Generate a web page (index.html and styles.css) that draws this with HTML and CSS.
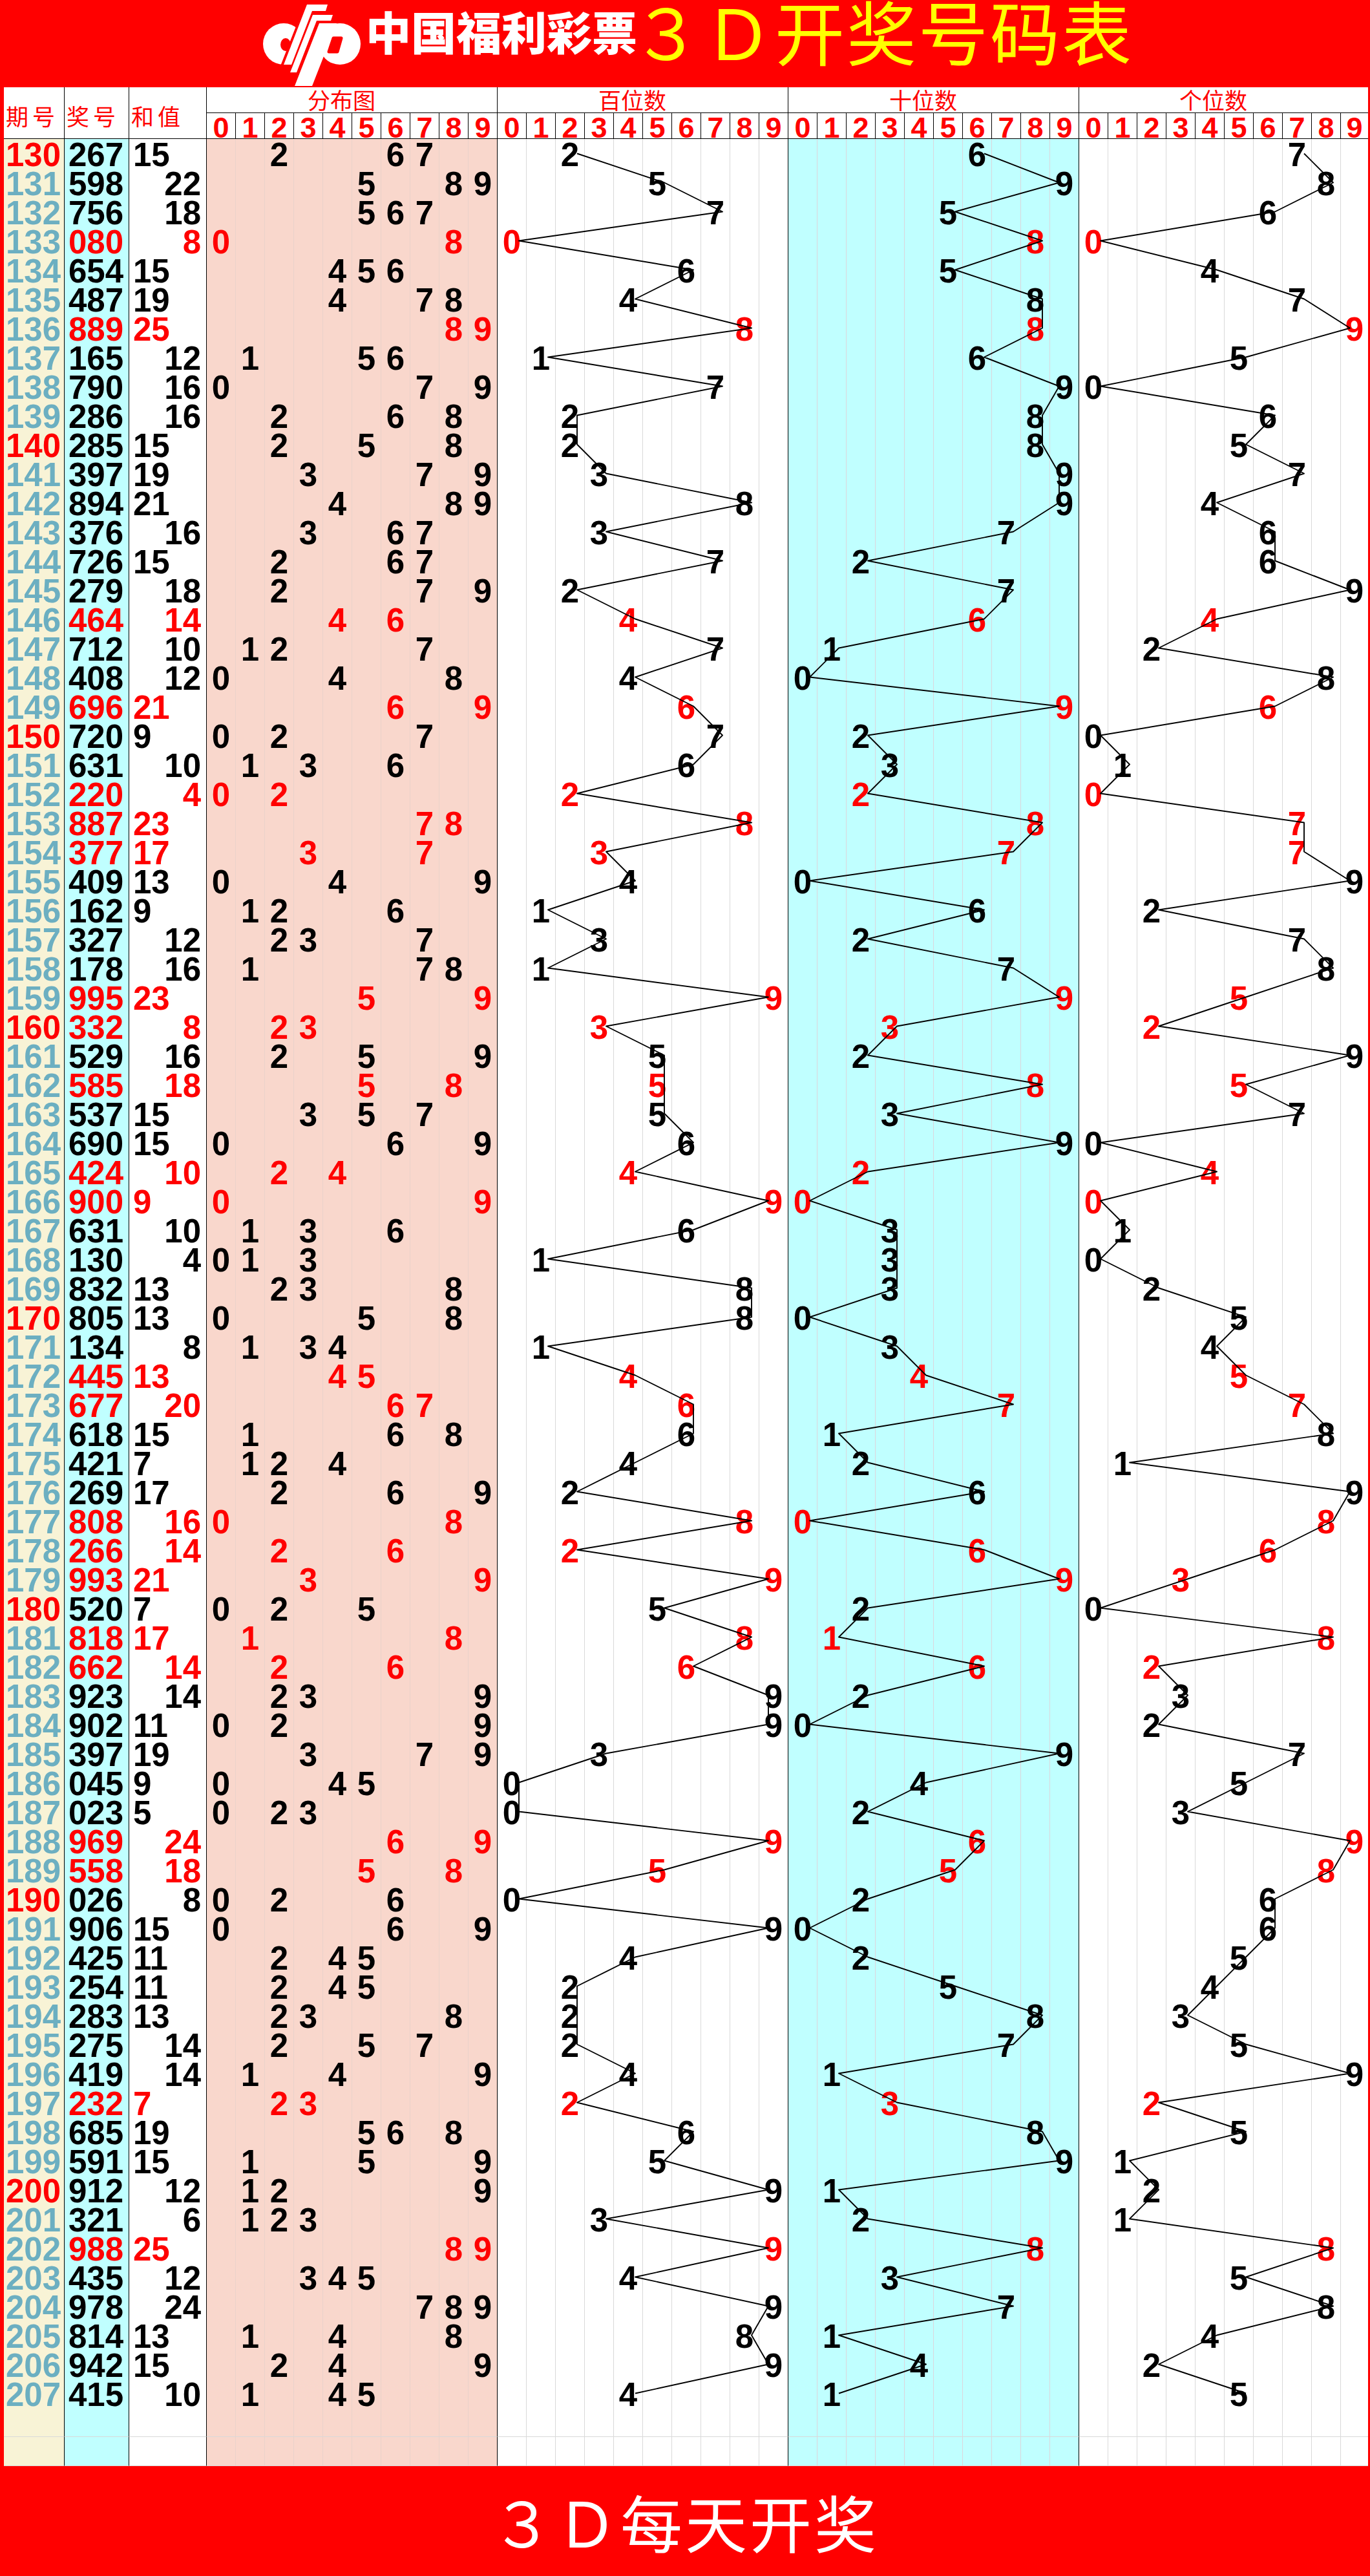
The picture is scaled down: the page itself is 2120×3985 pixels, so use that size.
FILE: index.html
```html
<!DOCTYPE html>
<html lang="zh-CN">
<head>
<meta charset="utf-8">
<title>3D开奖号码表</title>
<link rel="stylesheet" href="styles.css">
</head>
<body>
<header class="banner">
  <svg class="logo" viewBox="0 0 175 135" width="175" height="135" aria-hidden="true">
    <defs>
      <clipPath id="cclip"><polygon points="0,0 79,0 26,135 0,135"/></clipPath>
    </defs>
    <g fill="#fff">
      <circle cx="44" cy="68" r="32" clip-path="url(#cclip)"/>
      <polygon points="80,7 112,7 109,17 88,17 56,100 44,100"/>
      <polygon points="89,23 120,23 117,32 95,32 64,112 54,112"/>
      <circle cx="131" cy="68" r="32"/>
      <polygon points="99,36 126,36 88,133 61,133"/>
    </g>
    <ellipse cx="47" cy="69" rx="8" ry="10" fill="#f00"/>
    <path d="M121 59 L133 59 L127 80 L114 80 Z" fill="#f00" stroke="#f00" stroke-width="5" stroke-linejoin="round"/>
  </svg>
  <span class="brand">中国福利彩票</span>
  <h1 class="title">３Ｄ开奖号码表</h1>
</header>

<main class="sheet">
  <div class="thead">
    <div class="lab">期号</div>
    <div class="lab">奖号</div>
    <div class="lab">和值</div>
    <div class="grp">分布图</div>
    <div class="grp">百位数</div>
    <div class="grp">十位数</div>
    <div class="grp last">个位数</div>

    <div class="hd">0</div><div class="hd">1</div><div class="hd">2</div><div class="hd">3</div><div class="hd">4</div>
    <div class="hd">5</div><div class="hd">6</div><div class="hd">7</div><div class="hd">8</div><div class="hd">9</div>

    <div class="hd">0</div><div class="hd">1</div><div class="hd">2</div><div class="hd">3</div><div class="hd">4</div>
    <div class="hd">5</div><div class="hd">6</div><div class="hd">7</div><div class="hd">8</div><div class="hd">9</div>

    <div class="hd">0</div><div class="hd">1</div><div class="hd">2</div><div class="hd">3</div><div class="hd">4</div>
    <div class="hd">5</div><div class="hd">6</div><div class="hd">7</div><div class="hd">8</div><div class="hd">9</div>

    <div class="hd">0</div><div class="hd">1</div><div class="hd">2</div><div class="hd">3</div><div class="hd">4</div>
    <div class="hd">5</div><div class="hd">6</div><div class="hd">7</div><div class="hd">8</div><div class="hd last">9</div>
  </div>
  <div class="tbody" id="tbody"></div>
</main>

<footer class="footer">３Ｄ每天开奖</footer>

<script src="script.js"></script>
</body>
</html>
```

FILE: styles.css
```css
* {
  box-sizing: border-box;
}

:root {
  --cols: 94px 100px 120px repeat(39, 45px) 42px;
  --digit-font: "Liberation Sans", Arial, sans-serif;
  --cjk-font: "Noto Sans CJK SC", "Noto Sans", sans-serif;
  --red: #ff0000;
  --cream: #f8f3d6;
  --cyan: #c0ffff;
  --pink: #f9d7cc;
  --teal: #6cafc1;
  --grid: #d9d9d9;
}

html,
body {
  margin: 0;
  padding: 0;
}

body {
  width: 2120px;
  background: var(--red);
  font-family: var(--cjk-font);
}

/* ---------- banner ---------- */
.banner {
  height: 135px;
  display: flex;
  align-items: flex-start;
  padding-left: 395px;
}

.logo {
  display: block;
  flex: none;
}

.brand {
  margin: 13px 0 0 -4px;
  color: #fff;
  font: 900 70px/1 var(--cjk-font);
  white-space: nowrap;
}

.title {
  margin: -8px 0 0 -9px;
  color: #ffff00;
  font: 400 108px/1 var(--cjk-font);
  letter-spacing: 3px;
  white-space: nowrap;
}

/* ---------- sheet ---------- */
.sheet {
  display: block;
  margin-left: 6px;
  width: 2111px;
  background: #fff;
}

.thead {
  display: grid;
  grid-template-columns: var(--cols);
  grid-template-rows: 40px 40px;
  background: #fff;
}

.lab {
  grid-row: span 2;
  display: flex;
  align-items: center;
  padding: 8px 0 0 3px;
  border-right: 1px solid #000;
  border-bottom: 1px solid #000;
  color: var(--red);
  font: 400 35px/1 var(--cjk-font);
  letter-spacing: 6px;
  white-space: nowrap;
}

.grp {
  grid-column: span 10;
  padding-right: 32px;
  border-right: 1px solid #000;
  border-bottom: 1px solid #000;
  color: var(--red);
  font: 400 35px/38px var(--cjk-font);
  text-align: center;
  white-space: nowrap;
}

.grp.last,
.hd.last {
  border-right: none;
}

.hd {
  border-right: 1px solid #000;
  border-bottom: 1px solid #000;
  color: var(--red);
  font: 700 45px/45px var(--digit-font);
  text-align: center;
}

/* ---------- rows ---------- */
.tbody {
  position: relative;
}

.row {
  display: grid;
  grid-template-columns: var(--cols);
  height: 45px;
  color: #000;
  font: 700 51px/49px var(--digit-font);
}

.row > div {
  border-bottom: 1px solid var(--grid);
  white-space: nowrap;
}

.per {
  padding-left: 3px;
  background: var(--cream);
  color: var(--teal);
  border-right: 1px solid #000;
}

.per.ten {
  color: var(--red);
}

.draw {
  padding-left: 6px;
  background: var(--cyan);
  border-right: 1px solid #000;
}

.sum {
  background: #fff;
  border-right: 1px solid #000;
}

.sum.odd {
  padding-left: 6px;
}

.sum.even {
  padding-right: 8px;
  text-align: right;
}

.c {
  text-align: center;
  border-right: 1px solid var(--grid);
}

.c.dist {
  background: var(--pink);
  border-right-color: #ead2ca;
}

.c.p0,
.c.p2 {
  background: #fff;
}

.c.p1 {
  background: var(--cyan);
  border-right-color: #dcd6dc;
}

.c.end {
  border-right-color: #000;
}

.c.p2.end {
  border-right: none;
}

.row.pair .draw,
.row.pair .sum,
.row.pair .c {
  color: var(--red);
}

/* ---------- trend lines ---------- */
.trend {
  position: absolute;
  left: 0;
  top: 0;
  overflow: visible;
  pointer-events: none;
}

.trend-line {
  fill: none;
  stroke: #000;
  stroke-width: 1.9;
  stroke-linejoin: round;
}

/* ---------- footer ---------- */
.footer {
  height: 170px;
  display: flex;
  align-items: center;
  justify-content: center;
  color: #fff;
  font: 400 96px/1 var(--cjk-font);
  letter-spacing: 4px;
}
```

FILE: script.js
```js
(function () {
  var draws = (
    "267 598 756 080 654 487 889 165 790 286 " +
    "285 397 894 376 726 279 464 712 408 696 " +
    "720 631 220 887 377 409 162 327 178 995 " +
    "332 529 585 537 690 424 900 631 130 832 " +
    "805 134 445 677 618 421 269 808 266 993 " +
    "520 818 662 923 902 397 045 023 969 558 " +
    "026 906 425 254 283 275 419 232 685 591 " +
    "912 321 988 435 978 814 942 415"
  ).split(" ");

  var FIRST = 130;
  var ROW_H = 45;
  var CELL_W = 45;
  var POS_X = 764;   /* left edge of the hundreds section */
  var SEC_W = 450;
  var BLANK_ROWS = 2;

  var tbody = document.getElementById("tbody");
  var frag = document.createDocumentFragment();

  function el(cls, text) {
    var d = document.createElement("div");
    d.className = cls;
    if (text !== undefined && text !== null && text !== "") {
      d.textContent = text;
    }
    return d;
  }

  function buildRow(draw, n) {
    var digits = draw ? draw.split("").map(Number) : null;
    var pair = digits ? (digits[0] === digits[1] || digits[1] === digits[2] || digits[0] === digits[2]) : false;
    var row = el("row" + (pair ? " pair" : ""));
    var sum = digits ? digits[0] + digits[1] + digits[2] : null;

    row.appendChild(el("per" + (n !== null && n % 10 === 0 ? " ten" : ""), n !== null ? String(n) : ""));
    row.appendChild(el("draw", draw || ""));
    row.appendChild(el("sum" + (sum !== null ? (sum % 2 ? " odd" : " even") : ""), sum !== null ? String(sum) : ""));

    var d;
    for (d = 0; d < 10; d++) {
      row.appendChild(el("c dist" + (d === 9 ? " end" : ""), digits && digits.indexOf(d) >= 0 ? String(d) : ""));
    }
    for (var p = 0; p < 3; p++) {
      for (d = 0; d < 10; d++) {
        row.appendChild(el("c p" + p + (d === 9 ? " end" : ""), digits && digits[p] === d ? String(d) : ""));
      }
    }
    return row;
  }

  draws.forEach(function (draw, i) {
    frag.appendChild(buildRow(draw, FIRST + i));
  });
  for (var b = 0; b < BLANK_ROWS; b++) {
    frag.appendChild(buildRow(null, null));
  }
  tbody.appendChild(frag);

  /* anchor of a digit inside its section (the joint sits at the digit's right side, 9 at its left) */
  function anchor(digit) {
    return digit === 9 ? 419 : digit * CELL_W + 33;
  }

  var NS = "http://www.w3.org/2000/svg";
  var h = (draws.length + BLANK_ROWS) * ROW_H;
  var svg = document.createElementNS(NS, "svg");
  svg.setAttribute("class", "trend");
  svg.setAttribute("width", "2111");
  svg.setAttribute("height", String(h));
  svg.setAttribute("viewBox", "0 0 2111 " + h);

  for (var p = 0; p < 3; p++) {
    var pts = draws.map(function (draw, i) {
      var digit = Number(draw.charAt(p));
      var x = POS_X + p * SEC_W + anchor(digit);
      var y = i * ROW_H + ROW_H / 2;
      return x + "," + y;
    }).join(" ");
    var line = document.createElementNS(NS, "polyline");
    line.setAttribute("class", "trend-line");
    line.setAttribute("points", pts);
    svg.appendChild(line);
  }
  tbody.appendChild(svg);
})();
```
